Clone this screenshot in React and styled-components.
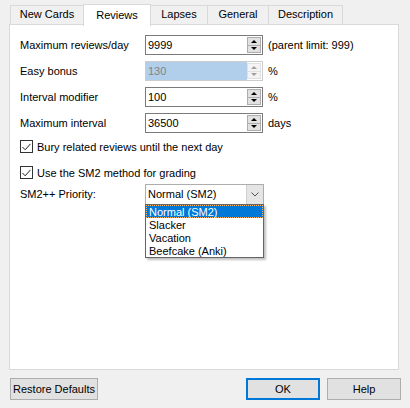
import React from "react";
import styled, { createGlobalStyle } from "styled-components";

const GlobalStyle = createGlobalStyle`
  body {
    margin: 0;
    background: #f0f0f0;
    font-family: "Liberation Sans", Arial, sans-serif;
    font-size: 11px;
    color: #000;
  }
`;

const Window = styled.div`
  width: 410px;
  height: 408px;
  box-sizing: border-box;
  padding-top: 4px;
  background: #f0f0f0;
  display: flex;
  flex-direction: column;
`;

const TabBar = styled.div`
  display: flex;
  align-items: flex-end;
  height: 20px;
  margin-left: 10px;
  position: relative;
  z-index: 2;
`;

const Tab = styled.div`
  box-sizing: border-box;
  width: ${(p) => p.w}px;
  height: ${(p) => (p.active ? 22 : 19)}px;
  margin-left: -1px;
  margin-bottom: ${(p) => (p.active ? -2 : 0)}px;
  border: 1px solid #d9d9d9;
  border-bottom: none;
  background: ${(p) => (p.active ? "#fff" : "#f0f0f0")};
  position: relative;
  z-index: ${(p) => (p.active ? 2 : 1)};
  display: flex;
  justify-content: center;
  padding-top: ${(p) => (p.active ? 4 : 2)}px;
  &:first-child {
    margin-left: 0;
  }
`;

const Panel = styled.div`
  box-sizing: border-box;
  margin-left: 9px;
  width: 390px;
  height: 346px;
  border: 1px solid #d9d9d9;
  background: #fff;
  padding: 10px 10px;
  display: flex;
  flex-direction: column;
`;

const Row = styled.div`
  display: flex;
  align-items: center;
  height: 20px;
  margin-top: ${(p) => p.mt || 0}px;
`;

const Label = styled.div`
  width: 125px;
  flex-shrink: 0;
`;

const SpinBox = styled.div`
  box-sizing: border-box;
  width: 118px;
  height: 20px;
  border: 1px solid ${(p) => (p.disabled ? "#cccccc" : "#7a7a7a")};
  background: #fff;
  display: flex;
  align-items: stretch;
`;

const SpinText = styled.div`
  flex: 1;
  padding-left: 2px;
  display: flex;
  align-items: center;
  background: ${(p) => (p.disabled ? "#b1cfeb" : "#fff")};
  color: ${(p) => (p.disabled ? "#838383" : "#000")};
`;

const SpinButtons = styled.div`
  width: 14px;
  display: flex;
  flex-direction: column;
  padding: 1px 1px 1px 0;
`;

const SpinBtn = styled.div`
  flex: 1;
  box-sizing: border-box;
  background: ${(p) => (p.disabled ? "#f4f4f4" : "#e1e1e1")};
  border: 1px solid ${(p) => (p.disabled ? "#e0e0e0" : "#adadad")};
  border-top: ${(p) => (p.down ? "none" : "")};
  display: flex;
  align-items: center;
  justify-content: center;
  &::after {
    content: "";
    width: 0;
    height: 0;
    border-left: 3px solid transparent;
    border-right: 3px solid transparent;
    ${(p) =>
      p.down
        ? `border-top: 3px solid ${p.disabled ? "#a0a0a0" : "#000"};`
        : `border-bottom: 3px solid ${p.disabled ? "#a0a0a0" : "#000"};`}
  }
`;

const Suffix = styled.div`
  margin-left: 5px;
`;

const CheckRow = styled.div`
  display: flex;
  align-items: center;
  height: 13px;
  margin-top: ${(p) => p.mt}px;
  gap: 4px;
`;

const CheckBox = styled.div`
  box-sizing: border-box;
  width: 13px;
  height: 13px;
  border: 1px solid #333;
  background: #fff;
  display: flex;
  align-items: center;
  justify-content: center;
`;

const ComboWrap = styled.div`
  position: relative;
`;

const Combo = styled.div`
  box-sizing: border-box;
  width: 119px;
  height: 21px;
  border: 1px solid #adadad;
  background: #fff;
  display: flex;
`;

const ComboText = styled.div`
  flex: 1;
  padding-left: 2px;
  display: flex;
  align-items: center;
`;

const ComboArrow = styled.div`
  width: 16px;
  background: #e5e5e5;
  border-left: 1px solid #cfcfcf;
  display: flex;
  align-items: center;
  justify-content: center;
`;

const DropList = styled.div`
  position: absolute;
  left: 0;
  top: 20px;
  width: 119px;
  box-sizing: border-box;
  border: 1px solid #646464;
  background: #fff;
  box-shadow: 2px 2px 2px rgba(0, 0, 0, 0.25);
  z-index: 5;
`;

const DropItem = styled.div`
  box-sizing: border-box;
  height: 13px;
  line-height: 12px;
  padding-left: 2px;
  background: ${(p) => (p.active ? "#0078d7" : "#fff")};
  color: ${(p) => (p.active ? "#fff" : "#000")};
  border: 1px dotted ${(p) => (p.active ? "#ffb35c" : "transparent")};
`;

const Footer = styled.div`
  display: flex;
  margin-top: 8px;
  padding: 0 9px 0 10px;
  gap: 7px;
`;

const Button = styled.div`
  box-sizing: border-box;
  width: ${(p) => p.w}px;
  height: 22px;
  background: #e1e1e1;
  border: ${(p) => (p.primary ? "2px solid #0078d7" : "1px solid #adadad")};
  display: flex;
  align-items: center;
  justify-content: center;
  margin-left: ${(p) => (p.push ? "auto" : "0")};
`;

function Spin({ value, disabled }) {
  return (
    <SpinBox disabled={disabled}>
      <SpinText disabled={disabled}>{value}</SpinText>
      <SpinButtons>
        <SpinBtn disabled={disabled} />
        <SpinBtn down disabled={disabled} />
      </SpinButtons>
    </SpinBox>
  );
}

function Check({ mt, children }) {
  return (
    <CheckRow mt={mt}>
      <CheckBox>
        <svg width="9" height="8" viewBox="0 0 9 8">
          <polyline points="0.5,4 3.2,6.8 8.5,0.8" fill="none" stroke="#222" strokeWidth="1" />
        </svg>
      </CheckBox>
      <span>{children}</span>
    </CheckRow>
  );
}

const tabs = [
  ["New Cards", 74],
  ["Reviews", 68],
  ["Lapses", 58],
  ["General", 62],
  ["Description", 75],
];

export default function App() {
  return (
    <>
      <GlobalStyle />
      <Window>
        <TabBar>
          {tabs.map(([t, w]) => (
            <Tab key={t} w={w} active={t === "Reviews"}>
              {t}
            </Tab>
          ))}
        </TabBar>
        <Panel>
          <Row>
            <Label>Maximum reviews/day</Label>
            <Spin value="9999" />
            <Suffix>(parent limit: 999)</Suffix>
          </Row>
          <Row mt={6}>
            <Label>Easy bonus</Label>
            <Spin value="130" disabled />
            <Suffix>%</Suffix>
          </Row>
          <Row mt={6}>
            <Label>Interval modifier</Label>
            <Spin value="100" />
            <Suffix>%</Suffix>
          </Row>
          <Row mt={6}>
            <Label>Maximum interval</Label>
            <Spin value="36500" />
            <Suffix>days</Suffix>
          </Row>
          <Check mt={7}>Bury related reviews until the next day</Check>
          <Check mt={13}>Use the SM2 method for grading</Check>
          <Row mt={5}>
            <Label>SM2++ Priority:</Label>
            <ComboWrap>
              <Combo>
                <ComboText>Normal (SM2)</ComboText>
                <ComboArrow>
                  <svg width="8" height="5" viewBox="0 0 8 5">
                    <polyline points="0.5,0.5 4,4 7.5,0.5" fill="none" stroke="#555" strokeWidth="1" />
                  </svg>
                </ComboArrow>
              </Combo>
              <DropList>
                <DropItem active>Normal (SM2)</DropItem>
                <DropItem>Slacker</DropItem>
                <DropItem>Vacation</DropItem>
                <DropItem>Beefcake (Anki)</DropItem>
              </DropList>
            </ComboWrap>
          </Row>
        </Panel>
        <Footer>
          <Button w={88}>Restore Defaults</Button>
          <Button w={74} primary push>
            OK
          </Button>
          <Button w={74}>Help</Button>
        </Footer>
      </Window>
    </>
  );
}
